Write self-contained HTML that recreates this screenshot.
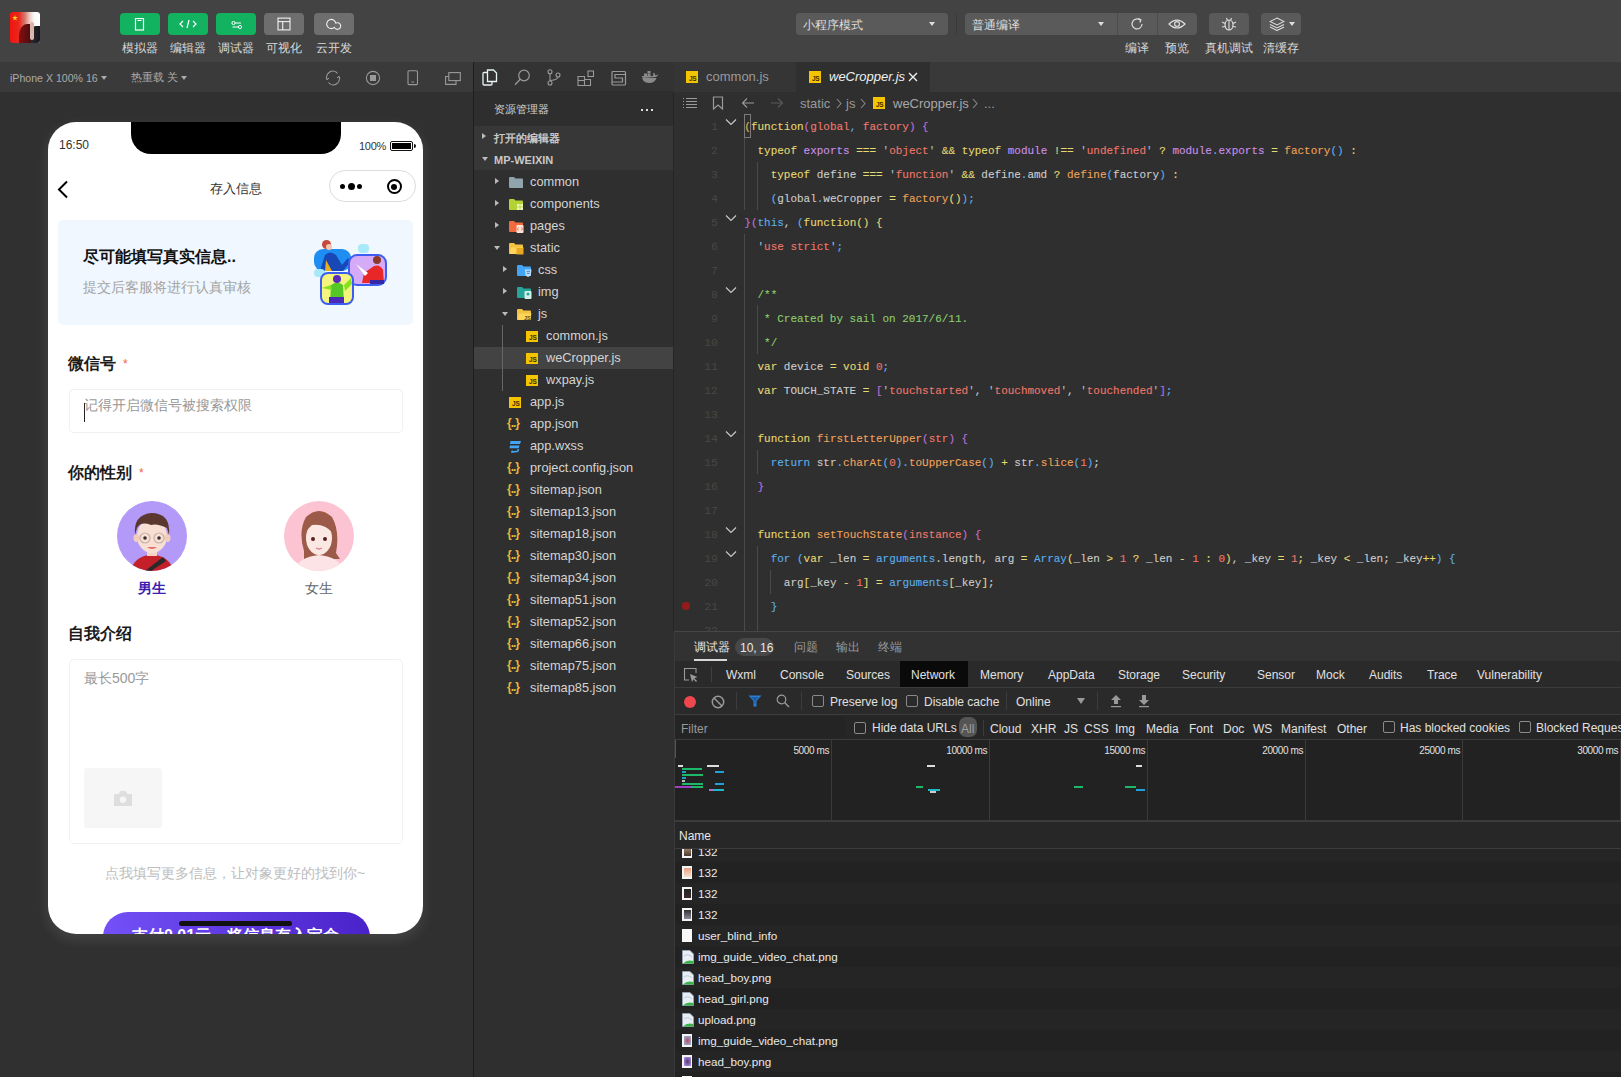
<!DOCTYPE html>
<html><head><meta charset="utf-8">
<style>
*{margin:0;padding:0;box-sizing:border-box}
html,body{width:1621px;height:1077px;overflow:hidden;background:#303030;font-family:"Liberation Sans",sans-serif;color:#ccc}
.a{position:absolute}
.t{position:absolute;white-space:nowrap;line-height:1}
/* toolbar */
#tb{left:0;top:0;width:1621px;height:62px;background:#434343}
.gbtn{position:absolute;top:13px;width:40px;height:22px;border-radius:4px;background:#12b261}
.gybtn{background:#6e6e6e}
.lbl{position:absolute;top:41px;font-size:12px;color:#d8d8d8;white-space:nowrap;line-height:14px;text-align:center;width:60px}
.dd{position:absolute;top:13px;height:22px;background:#5a5a5a;border-radius:4px}
.tri{position:absolute;width:0;height:0;border-left:3px solid transparent;border-right:3px solid transparent;border-top:4px solid #ddd}
/* sim */
#simbar{left:0;top:62px;width:473px;height:30px;background:#3a3a3a}
#sep1{left:473px;top:62px;width:1px;height:1015px;background:#1e1e1e}
#phone{left:48px;top:122px;width:375px;height:812px;background:#fff;border-radius:28px;overflow:hidden;box-shadow:0 5px 12px 2px rgba(255,255,255,.085)}
/* explorer */
#exp{left:474px;top:62px;width:200px;height:1015px;background:#2f2f2f}
.row{position:absolute;left:0;width:200px;height:22px;font-size:13px;color:#d0d0d0;line-height:22px;white-space:nowrap}
/* editor */
#ed{left:674px;top:62px;width:947px;height:570px;background:#2f2f2f}
.ln{position:absolute;left:0;width:44px;margin-top:1px;text-align:right;font-family:"Liberation Mono",monospace;font-size:11.5px;color:#474747;line-height:24px}
.cl{position:absolute;left:70.3px;margin-top:1px;font-family:"Liberation Mono",monospace;font-size:10.98px;line-height:24px;white-space:pre;color:#d4d4d4;-webkit-text-stroke:0.1px currentColor}
/* devtools */
#dv{left:674px;top:632px;width:947px;height:445px;background:#242424}
</style></head><body>
<div id="tb" class="a">
<div class="a" style="left:10px;top:12px;width:30px;height:31px;border-radius:3px;overflow:hidden;background:linear-gradient(90deg,#f0140e 0%,#e8281e 30%,#d87a70 50%,#ecc8c0 65%,#fafafa 80%,#fff 100%)">
 <div class="a" style="left:9px;top:12px;width:14px;height:19px;border-radius:60% 20% 0 0;background:linear-gradient(90deg,#8a0c0c,#3a1014)"></div>
 <div class="a" style="left:21px;top:14px;width:9px;height:17px;border-radius:50% 0 0 0;background:linear-gradient(90deg,#2a2a30,#15151a)"></div>
 <div class="a" style="left:20px;top:10px;width:4px;height:18px;border-radius:2px;background:linear-gradient(#e0b0a8,#d8b8b0)"></div>
 <div class="a" style="left:2px;top:3px;width:6px;height:6px;background:#ffd21a;clip-path:polygon(50% 0,61% 35%,98% 35%,68% 57%,79% 91%,50% 70%,21% 91%,32% 57%,2% 35%,39% 35%)"></div>
</div>
<div class="gbtn" style="left:120px"><svg class="a" style="left:14px;top:5px" width="12" height="13" viewBox="0 0 12 13"><rect x="1.5" y="0.5" width="8" height="11.5" fill="none" stroke="#fff" stroke-width="1.2"/><line x1="3.5" y1="2.5" x2="7.5" y2="2.5" stroke="#fff" stroke-width="1"/></svg></div>
<div class="gbtn" style="left:168px"><svg class="a" style="left:11px;top:6px" width="18" height="10" viewBox="0 0 18 10"><path d="M4 2 L1 5 L4 8 M14 2 L17 5 L14 8 M10 1 L8 9" fill="none" stroke="#fff" stroke-width="1.2"/></svg></div>
<div class="gbtn" style="left:216px"><svg class="a" style="left:15px;top:8px" width="12" height="9" viewBox="0 0 12 9"><line x1="3.5" y1="2" x2="10" y2="2" stroke="#fff" stroke-width="1"/><line x1="1.5" y1="6" x2="8" y2="6" stroke="#fff" stroke-width="1"/><circle cx="2.5" cy="2" r="1.6" fill="#12b261" stroke="#fff" stroke-width="1"/><circle cx="9" cy="6" r="1.6" fill="#12b261" stroke="#fff" stroke-width="1"/></svg></div>
<div class="gbtn gybtn" style="left:264px"><svg class="a" style="left:13px;top:4px" width="14" height="14" viewBox="0 0 14 14"><rect x="1" y="1.1" width="12" height="11.8" fill="none" stroke="#f0f0f0" stroke-width="1.1"/><line x1="1" y1="4.6" x2="13" y2="4.6" stroke="#f0f0f0" stroke-width="1.1"/><line x1="5.7" y1="4.6" x2="5.7" y2="12.9" stroke="#f0f0f0" stroke-width="1.1"/></svg></div>
<div class="gbtn gybtn" style="left:314px"><svg class="a" style="left:11px;top:5px" width="18" height="13" viewBox="0 0 18 13"><path d="M10.81 5.11 A4.6 4.6 0 1 0 9.41 9.39 A3.3 3.3 0 1 0 10.81 5.11 Z" fill="none" stroke="#f0f0f0" stroke-width="1.1"/></svg></div>
<div class="lbl" style="left:110px">模拟器</div>
<div class="lbl" style="left:158px">编辑器</div>
<div class="lbl" style="left:206px">调试器</div>
<div class="lbl" style="left:254px">可视化</div>
<div class="lbl" style="left:304px">云开发</div>

<div class="dd" style="left:796px;width:152px"><div class="t" style="left:7px;top:6px;font-size:12px;color:#ddd">小程序模式</div><div class="tri" style="left:133px;top:9px"></div></div>
<div class="a" style="left:956px;top:14px;width:1px;height:20px;background:#3a3a3a"></div>
<div class="dd" style="left:965px;width:232px"><div class="t" style="left:7px;top:6px;font-size:12px;color:#ddd">普通编译</div><div class="tri" style="left:133px;top:9px"></div>
 <div class="a" style="left:152px;top:0;width:1px;height:22px;background:#4c4c4c"></div>
 <div class="a" style="left:192px;top:0;width:1px;height:22px;background:#4c4c4c"></div>
 <svg class="a" style="left:164px;top:3px" width="16" height="16" viewBox="0 0 16 16"><path d="M13 8 A5 5 0 1 1 11.2 4.1" fill="none" stroke="#ddd" stroke-width="1.2"/><path d="M9.5 2.5 L12 4 L10.8 6.6" fill="none" stroke="#ddd" stroke-width="1.2"/></svg>
 <svg class="a" style="left:203px;top:5px" width="18" height="12" viewBox="0 0 18 12"><path d="M1 6 Q9 -2 17 6 Q9 14 1 6 Z" fill="none" stroke="#ddd" stroke-width="1.2"/><circle cx="9" cy="6" r="2.4" fill="none" stroke="#ddd" stroke-width="1.2"/></svg>
</div>
<div class="dd" style="left:1209px;width:40px"><svg class="a" style="left:12px;top:3px" width="16" height="16" viewBox="0 0 16 16"><ellipse cx="8" cy="9" rx="4" ry="5" fill="none" stroke="#ddd" stroke-width="1.2"/><path d="M8 4 V14 M1 6 L4 7.5 M15 6 L12 7.5 M1 11 L4 10.5 M15 11 L12 10.5 M5.5 2 L6.5 4.5 M10.5 2 L9.5 4.5" fill="none" stroke="#ddd" stroke-width="1.1"/></svg></div>
<div class="dd" style="left:1261px;width:40px"><svg class="a" style="left:8px;top:4px" width="16" height="14" viewBox="0 0 16 14"><path d="M8 1 L15 4.5 L8 8 L1 4.5 Z" fill="none" stroke="#ddd" stroke-width="1.1"/><path d="M1 7.5 L8 11 L15 7.5 M1 10 L8 13.5 L15 10" fill="none" stroke="#ddd" stroke-width="1.1"/></svg><div class="tri" style="left:28px;top:9px"></div></div>
<div class="lbl" style="left:1107px">编译</div>
<div class="lbl" style="left:1147px">预览</div>
<div class="lbl" style="left:1199px">真机调试</div>
<div class="lbl" style="left:1251px">清缓存</div>
</div>
<div id="simbar" class="a">
<div class="t" style="left:10px;top:10.5px;font-size:10.6px;color:#aaa">iPhone X 100% 16</div><div class="tri" style="left:100.5px;top:14px;border-top-color:#aaa;border-left-width:3.5px;border-right-width:3.5px;border-top-width:4.5px"></div>
<div class="t" style="left:131px;top:9.5px;font-size:11px;color:#aaa">热重载 关</div><div class="tri" style="left:181px;top:14px;border-top-color:#aaa;border-left-width:3.5px;border-right-width:3.5px;border-top-width:4.5px"></div>
<svg class="a" style="left:325px;top:8px" width="16" height="16" viewBox="0 0 16 16"><path d="M2.2 9.5 A6 6 0 0 1 12.5 3.5" fill="none" stroke="#999" stroke-width="1.1"/><path d="M13.8 6.5 A6 6 0 0 1 3.5 12.5" fill="none" stroke="#999" stroke-width="1.1"/><path d="M1 7.5 L2.2 9.8 L4 8" fill="none" stroke="#999" stroke-width="1"/><path d="M15 8.5 L13.8 6.2 L12 8" fill="none" stroke="#999" stroke-width="1"/></svg>
<svg class="a" style="left:365px;top:8px" width="16" height="16" viewBox="0 0 16 16"><circle cx="8" cy="8" r="6.6" fill="none" stroke="#999" stroke-width="1.1"/><rect x="5" y="5" width="6" height="6" fill="#999"/></svg>
<svg class="a" style="left:407px;top:8px" width="12" height="16" viewBox="0 0 12 16"><rect x="1" y="0.8" width="9.5" height="13.8" rx="1" fill="none" stroke="#999" stroke-width="1.1"/><line x1="4.3" y1="12" x2="7.2" y2="12" stroke="#999" stroke-width="1"/></svg>
<svg class="a" style="left:445px;top:10px" width="16" height="14" viewBox="0 0 16 14"><rect x="3.8" y="0.6" width="11.5" height="8" fill="none" stroke="#999" stroke-width="1.1"/><path d="M3.8 4.5 H0.6 V12.4 H11 V8.6" fill="none" stroke="#999" stroke-width="1.1"/></svg>
</div>
<div id="sep1" class="a"></div>
<div id="phone" class="a">
<div class="a" style="left:83px;top:0;width:210px;height:32px;background:#000;border-radius:0 0 20px 20px"></div>
<div class="t" style="left:11px;top:17px;font-size:12px;color:#333">16:50</div>
<div class="t" style="left:311px;top:19px;font-size:11px;color:#333;letter-spacing:-0.3px">100%</div>
<div class="a" style="left:342px;top:19px;width:23px;height:10px;border:1.2px solid #111;border-radius:2px;padding:1px"><div style="width:100%;height:100%;background:#000"></div></div>
<div class="a" style="left:365.5px;top:22px;width:2px;height:4px;background:#111;border-radius:0 2px 2px 0"></div>
<svg class="a" style="left:8px;top:58px" width="14" height="19" viewBox="0 0 14 19"><path d="M11 1.5 L3 9.5 L11 17.5" fill="none" stroke="#000" stroke-width="2"/></svg>
<div class="t" style="left:162px;top:60px;font-size:13px;color:#333">存入信息</div>
<div class="a" style="left:281px;top:48px;width:87px;height:32px;border:1px solid #dcdcdc;border-radius:16px"></div>
<div class="a" style="left:292px;top:62.3px;width:5px;height:5px;border-radius:50%;background:#000"></div>
<div class="a" style="left:299.5px;top:61.3px;width:7px;height:7px;border-radius:50%;background:#000"></div>
<div class="a" style="left:309px;top:62.3px;width:5px;height:5px;border-radius:50%;background:#000"></div>
<div class="a" style="left:338.5px;top:56.8px;width:15.5px;height:15.5px;border-radius:50%;border:2px solid #000"></div>
<div class="a" style="left:343.3px;top:61.6px;width:6px;height:6px;border-radius:50%;background:#000"></div>

<div class="a" style="left:10px;top:98px;width:355px;height:105px;background:#f0f7fe;border-radius:5px"></div>
<div class="t" style="left:35px;top:127px;font-size:16px;font-weight:bold;color:#111">尽可能填写真实信息..</div>
<div class="t" style="left:35px;top:158px;font-size:14px;color:#a3a3a3">提交后客服将进行认真审核</div>
<svg class="a" style="left:264px;top:116px" width="78" height="68" viewBox="0 0 78 68">
 <rect x="2" y="11" width="37" height="22" rx="9" fill="#1e8ef2"/>
 <path d="M8 33 L13 17 Q18 12 24 17 L30 27 L36 20 L38 24 L31 33 Z" fill="#1847b8"/>
 <path d="M14 22 L20 33 L13 33 Z" fill="#e8b020"/>
 <circle cx="14.5" cy="6.5" r="4.5" fill="#c44a3a"/>
 <circle cx="17" cy="9" r="3" fill="#f5c5b0"/>
 <rect x="2" y="31" width="11" height="8" rx="4" fill="#a8e8f8"/>
 <rect x="46" y="6" width="11" height="9" rx="4" fill="#a8e8f8"/>
 <rect x="37" y="17" width="37" height="30" rx="8" fill="#d5aaf6" stroke="#3b5df0" stroke-width="2"/>
 <path d="M50 45 L52 35 L62 28 Q68 26 71 32 L72 45 Z" fill="#e82828"/>
 <path d="M44 26 L53 38 L56 35 Z" fill="#fff"/>
 <circle cx="65" cy="22" r="4" fill="#8a3a2a"/>
 <rect x="58" y="42" width="14" height="4" fill="#3428a8"/>
 <rect x="9" y="35" width="32" height="31" rx="7" fill="#f4f57e" stroke="#3b5df0" stroke-width="2"/>
 <path d="M18 65 L19 47 Q25 42 31 47 L32 65 Z" fill="#55c828"/>
 <path d="M10 50 L19 47 L20 52 Z M32 47 L39 40 L40 46 L33 53 Z" fill="#88e020"/>
 <circle cx="25" cy="41" r="4" fill="#5a2ab8"/>
 <rect x="17" y="59" width="15" height="6" fill="#4a28b8"/>
</svg>

<div class="t" style="left:20px;top:234px;font-size:16px;font-weight:bold;color:#1a1a1a">微信号</div>
<div class="t" style="left:75px;top:236px;font-size:12px;color:#f0604d">*</div>
<div class="a" style="left:21px;top:267px;width:334px;height:44px;border:1px solid #f1f1f1;border-radius:4px"></div>
<div class="t" style="left:36px;top:276px;font-size:14px;color:#999">记得开启微信号被搜索权限</div>
<div class="a" style="left:36px;top:281px;width:1.3px;height:19px;background:#222"></div>

<div class="t" style="left:20px;top:343px;font-size:16px;font-weight:bold;color:#1a1a1a">你的性别</div>
<div class="t" style="left:91px;top:345px;font-size:12px;color:#f0604d">*</div>

<svg class="a" style="left:69px;top:379px" width="70" height="70" viewBox="0 0 70 70">
 <defs><clipPath id="cb"><circle cx="35" cy="35" r="35"/></clipPath></defs>
 <circle cx="35" cy="35" r="35" fill="#b39af9"/>
 <g clip-path="url(#cb)">
 <path d="M14 70 Q16 56 35 53 Q54 56 56 70 Z" fill="#c4202a"/>
 <path d="M28 70 L46 56 L49 60 L34 70 Z" fill="#2a2a2a"/>
 <rect x="30" y="46" width="10" height="9" fill="#f5d3c3"/>
 <ellipse cx="35" cy="35" rx="15" ry="17" fill="#f7e0d3"/>
 <ellipse cx="19.5" cy="37" rx="3" ry="4" fill="#f0cdbd"/>
 <ellipse cx="50.5" cy="37" rx="3" ry="4" fill="#f0cdbd"/>
 <path d="M18 34 Q16 14 34 12 Q54 12 52 34 L50 27 Q40 22 34 24 Q24 20 20 27 Z" fill="#5a3830"/>
 <circle cx="28" cy="37" r="5" fill="none" stroke="#c8b0a8" stroke-width="1.2"/>
 <circle cx="42" cy="37" r="5" fill="none" stroke="#c8b0a8" stroke-width="1.2"/>
 <circle cx="28" cy="37" r="1.8" fill="#3a2a2a"/>
 <circle cx="42" cy="37" r="1.8" fill="#3a2a2a"/>
 <path d="M30 46 Q35 50 40 46 Z" fill="#e86a6a"/>
 </g>
</svg>
<svg class="a" style="left:236px;top:379px" width="70" height="70" viewBox="0 0 70 70">
 <defs><clipPath id="cg"><circle cx="35" cy="35" r="35"/></clipPath></defs>
 <circle cx="35" cy="35" r="35" fill="#fcc3d3"/>
 <g clip-path="url(#cg)">
 <path d="M20 50 Q14 30 22 16 Q35 4 48 16 Q56 30 52 52 L56 58 L48 58 L20 58 Z" fill="#9c5a48"/>
 <path d="M10 70 Q14 56 35 54 Q56 56 60 70 Z" fill="#fbe3e6"/>
 <ellipse cx="35" cy="37" rx="13" ry="17" fill="#fbe8e2"/>
 <path d="M22 30 Q26 16 40 18 Q48 22 49 32 Q40 22 28 24 Z" fill="#9c5a48"/>
 <circle cx="29" cy="38" r="2" fill="#5a2020"/>
 <circle cx="41" cy="38" r="2" fill="#5a2020"/>
 <path d="M32 47 Q35 49 38 47" fill="none" stroke="#e07a8a" stroke-width="1.3"/>
 </g>
</svg>
<div class="t" style="left:90px;top:459px;font-size:14px;font-weight:bold;color:#3a1eb0">男生</div>
<div class="t" style="left:257px;top:459px;font-size:14px;color:#666">女生</div>

<div class="t" style="left:20px;top:504px;font-size:16px;font-weight:bold;color:#1a1a1a">自我介绍</div>
<div class="a" style="left:20.5px;top:537px;width:334px;height:185px;border:1px solid #f1f1f1;border-radius:5px"></div>
<div class="t" style="left:36px;top:549px;font-size:14px;color:#999">最长500字</div>
<div class="a" style="left:36px;top:646px;width:78px;height:60px;background:#f6f6f7;border-radius:3px"></div>
<svg class="a" style="left:65px;top:668px" width="20" height="17" viewBox="0 0 20 17"><path d="M1 4 H5.5 L7.5 1 H12.5 L14.5 4 H19 V16 H1 Z" fill="#dedede"/><circle cx="10" cy="9.8" r="3.2" fill="#f6f6f7"/></svg>
<div class="t" style="left:57px;top:744px;font-size:14px;color:#bdbdbd">点我填写更多信息，让对象更好的找到你~</div>
<div class="a" style="left:54.5px;top:790px;width:267px;height:50px;border-radius:25px;background:linear-gradient(90deg,#7350f7,#4a22c9)"></div>
<div class="t" style="left:84px;top:806px;font-size:16px;font-weight:bold;color:#fff">支付0.01元，将信息存入宝盒</div>
<div class="a" style="left:131px;top:798.5px;width:113px;height:5px;border-radius:3px;background:#111"></div>
</div>
<div id="exp" class="a">
<div class="a" style="left:0;top:0;width:200px;height:29px;background:#333"></div>
<svg class="a" style="left:8px;top:7px" width="16" height="17" viewBox="0 0 16 17"><path d="M5.5 3.5 H2 Q1 3.5 1 4.5 V15 Q1 16 2 16 H9 Q10 16 10 15 V13" fill="none" stroke="#e6f4f4" stroke-width="1.3"/><path d="M5.5 1 H11.5 L14.5 4 V12.5 H5.5 Z" fill="none" stroke="#e6f4f4" stroke-width="1.3"/></svg>
<svg class="a" style="left:40px;top:7px" width="17" height="17" viewBox="0 0 17 17"><circle cx="10" cy="6.5" r="5.3" fill="none" stroke="#999" stroke-width="1.2"/><line x1="6.2" y1="10.3" x2="1" y2="15.8" stroke="#999" stroke-width="1.3"/></svg>
<svg class="a" style="left:73px;top:7px" width="14" height="17" viewBox="0 0 14 17"><circle cx="3" cy="2.8" r="2" fill="none" stroke="#999" stroke-width="1.1"/><circle cx="3" cy="14" r="2" fill="none" stroke="#999" stroke-width="1.1"/><circle cx="11" cy="6" r="2" fill="none" stroke="#999" stroke-width="1.1"/><path d="M3 4.8 V12 M11 8 Q11 10.5 3.5 11.5" fill="none" stroke="#999" stroke-width="1.1"/></svg>
<svg class="a" style="left:103px;top:8px" width="18" height="17" viewBox="0 0 18 17"><path d="M1 6.5 H7.5 V15.5 H1 Z M7.5 9.5 H13.5 V15.5 H1" fill="none" stroke="#999" stroke-width="1.1"/><line x1="1" y1="10.5" x2="7.5" y2="10.5" stroke="#999" stroke-width="1.1"/><rect x="11" y="1" width="5.5" height="5.5" fill="none" stroke="#999" stroke-width="1.1"/></svg>
<svg class="a" style="left:137px;top:8px" width="16" height="16" viewBox="0 0 16 16"><rect x="1" y="1.5" width="13.5" height="13.5" rx="1" fill="none" stroke="#999" stroke-width="1.2"/><path d="M14 4.5 H4 V8 H11.5 V12 H1" fill="none" stroke="#999" stroke-width="1.2"/></svg>
<svg class="a" style="left:167px;top:9px" width="18" height="13" viewBox="0 0 18 13"><path d="M1 6 H15 Q17 5 17.5 3 Q16 4 14.5 4.5 Q14 2 12.5 1.5 L12 5 H1 Q1 12 8 12 Q14 12 15.5 7 Z" fill="#8a8a8a"/><rect x="3" y="2.5" width="3" height="2.5" fill="#8a8a8a"/><rect x="6.5" y="2.5" width="3" height="2.5" fill="#8a8a8a"/><rect x="6.5" y="0" width="3" height="2.2" fill="#8a8a8a"/></svg>
<div class="a" style="left:0;top:29px;width:200px;height:35px;background:#2e2e2e"></div>
<div class="t" style="left:20px;top:42px;font-size:11px;color:#d0d0d0">资源管理器</div>
<div class="a" style="left:167px;top:47px;width:2.2px;height:2.2px;background:#ddd;box-shadow:5px 0 #ddd,10px 0 #ddd"></div>
<div class="a" style="left:0;top:64px;width:200px;height:44px;background:#373737"></div>
<div class="tri" style="left:8px;top:71px;border:0;border-top:3.5px solid transparent;border-bottom:3.5px solid transparent;border-left:4.5px solid #bbb"></div>
<div class="t" style="left:20px;top:70.5px;font-size:11px;font-weight:bold;color:#c8c8c8">打开的编辑器</div>
<div class="tri" style="left:8px;top:95px;border-top:4.5px solid #bbb;border-left:3.5px solid transparent;border-right:3.5px solid transparent"></div>
<div class="t" style="left:20px;top:93px;font-size:11px;font-weight:bold;color:#c8c8c8">MP-WEIXIN</div>
<div class="tri" style="left:21px;top:116px;border:0;border-top:3.5px solid transparent;border-bottom:3.5px solid transparent;border-left:4.5px solid #bbb"></div><svg class="a" style="left:35px;top:115px" width="15" height="12" viewBox="0 0 15 12"><path d="M0 1 Q0 0 1 0 H5 L6.5 1.5 H13 Q14 1.5 14 2.5 V10.5 Q14 11 13 11 H1 Q0 11 0 10 Z" fill="#90a4ae"/></svg><div class="t" style="left:56px;top:114.3px;font-size:12.8px;color:#d4d4d4">common</div><div class="tri" style="left:21px;top:138px;border:0;border-top:3.5px solid transparent;border-bottom:3.5px solid transparent;border-left:4.5px solid #bbb"></div><svg class="a" style="left:35px;top:137px" width="15" height="12" viewBox="0 0 15 12"><path d="M0 1 Q0 0 1 0 H5 L6.5 1.5 H13 Q14 1.5 14 2.5 V10.5 Q14 11 13 11 H1 Q0 11 0 10 Z" fill="#b3d335"/><rect x="8" y="5" width="2.6" height="2.6" fill="#eaf5c0"/><rect x="11.4" y="5" width="2.6" height="2.6" fill="#eaf5c0"/><rect x="8" y="8.4" width="2.6" height="2.6" fill="#eaf5c0"/><rect x="11.4" y="8.4" width="2.6" height="2.6" fill="#eaf5c0"/></svg><div class="t" style="left:56px;top:136.3px;font-size:12.8px;color:#d4d4d4">components</div><div class="tri" style="left:21px;top:160px;border:0;border-top:3.5px solid transparent;border-bottom:3.5px solid transparent;border-left:4.5px solid #bbb"></div><svg class="a" style="left:35px;top:159px" width="15" height="12" viewBox="0 0 15 12"><path d="M0 1 Q0 0 1 0 H5 L6.5 1.5 H13 Q14 1.5 14 2.5 V10.5 Q14 11 13 11 H1 Q0 11 0 10 Z" fill="#f26a3d"/><rect x="7.5" y="4" width="7" height="8" rx="1" fill="#fde2d8"/><path d="M9.5 6.5 L8.5 8 L9.5 9.5 M12.5 6.5 L13.5 8 L12.5 9.5" fill="none" stroke="#e0503a" stroke-width="0.8"/></svg><div class="t" style="left:56px;top:158.3px;font-size:12.8px;color:#d4d4d4">pages</div><div class="tri" style="left:20px;top:184px;border-top:4.5px solid #bbb;border-left:3.5px solid transparent;border-right:3.5px solid transparent"></div><svg class="a" style="left:35px;top:181px" width="15" height="12" viewBox="0 0 15 12"><path d="M0 1 Q0 0 1 0 H5 L6.5 1.5 H13 Q14 1.5 14 2.5 V10.5 Q14 11 13 11 H1 Q0 11 0 10 Z" fill="#f3c240"/><path d="M2 4.5 H14.5 L13 11 H0.5 Z" fill="#ffd45a"/><rect x="7.5" y="5" width="7" height="6.5" fill="#e8a820"/></svg><div class="t" style="left:56px;top:180.3px;font-size:12.8px;color:#d4d4d4">static</div><div class="tri" style="left:29px;top:204px;border:0;border-top:3.5px solid transparent;border-bottom:3.5px solid transparent;border-left:4.5px solid #bbb"></div><svg class="a" style="left:43px;top:203px" width="15" height="12" viewBox="0 0 15 12"><path d="M0 1 Q0 0 1 0 H5 L6.5 1.5 H13 Q14 1.5 14 2.5 V10.5 Q14 11 13 11 H1 Q0 11 0 10 Z" fill="#42a5f5"/><path d="M8 4.5 H14.5 L13.8 10.5 L11 12 L8.5 10.5 Z" fill="#bfe0fb"/><path d="M9.5 6.3 H13 M9.7 8.3 H12.8" stroke="#2a7ad0" stroke-width="0.9"/></svg><div class="t" style="left:64px;top:202.3px;font-size:12.8px;color:#d4d4d4">css</div><div class="tri" style="left:29px;top:226px;border:0;border-top:3.5px solid transparent;border-bottom:3.5px solid transparent;border-left:4.5px solid #bbb"></div><svg class="a" style="left:43px;top:225px" width="15" height="12" viewBox="0 0 15 12"><path d="M0 1 Q0 0 1 0 H5 L6.5 1.5 H13 Q14 1.5 14 2.5 V10.5 Q14 11 13 11 H1 Q0 11 0 10 Z" fill="#26a69a"/><rect x="7.5" y="4" width="7" height="8" rx="1" fill="#d0f0e8"/><circle cx="11" cy="7" r="1.5" fill="#26a69a"/></svg><div class="t" style="left:64px;top:224.3px;font-size:12.8px;color:#d4d4d4">img</div><div class="tri" style="left:28px;top:250px;border-top:4.5px solid #bbb;border-left:3.5px solid transparent;border-right:3.5px solid transparent"></div><svg class="a" style="left:43px;top:247px" width="15" height="12" viewBox="0 0 15 12"><path d="M0 1 Q0 0 1 0 H5 L6.5 1.5 H13 Q14 1.5 14 2.5 V10.5 Q14 11 13 11 H1 Q0 11 0 10 Z" fill="#f3c240"/><path d="M2 4.5 H14.5 L13 11 H0.5 Z" fill="#ffd45a"/><text x="7" y="10.5" font-size="5.5" font-weight="bold" fill="#6a4a00" font-family="Liberation Sans">JS</text></svg><div class="t" style="left:64px;top:246.3px;font-size:12.8px;color:#d4d4d4">js</div><div class="a" style="left:0;top:285px;width:200px;height:22px;background:#434343"></div><div class="a" style="left:28px;top:263px;width:1px;height:66px;background:#666"></div><div class="a" style="left:52px;top:269px;width:12px;height:11px;background:#f5c400"><div class="t" style="left:3px;top:4px;font-size:6.5px;font-weight:bold;color:#3a2a00">JS</div></div><div class="t" style="left:72px;top:268.3px;font-size:12.8px;color:#d4d4d4">common.js</div><div class="a" style="left:52px;top:291px;width:12px;height:11px;background:#f5c400"><div class="t" style="left:3px;top:4px;font-size:6.5px;font-weight:bold;color:#3a2a00">JS</div></div><div class="t" style="left:72px;top:290.3px;font-size:12.8px;color:#d4d4d4">weCropper.js</div><div class="a" style="left:52px;top:313px;width:12px;height:11px;background:#f5c400"><div class="t" style="left:3px;top:4px;font-size:6.5px;font-weight:bold;color:#3a2a00">JS</div></div><div class="t" style="left:72px;top:312.3px;font-size:12.8px;color:#d4d4d4">wxpay.js</div><div class="a" style="left:35px;top:335px;width:12px;height:11px;background:#f5c400"><div class="t" style="left:3px;top:4px;font-size:6.5px;font-weight:bold;color:#3a2a00">JS</div></div><div class="t" style="left:56px;top:334.3px;font-size:12.8px;color:#d4d4d4">app.js</div><div class="t" style="left:33px;top:355px;font-size:12px;font-weight:bold;color:#e8b83a;letter-spacing:-1px">{..}</div><div class="t" style="left:56px;top:356.3px;font-size:12.8px;color:#d4d4d4">app.json</div><svg class="a" style="left:35px;top:378px" width="13" height="13" viewBox="0 0 13 13"><path d="M1.5 1 H12 L11 4 H1 Z M1 5.5 H10.5 L9.7 8.3 H0.5 Z" fill="#42a5f5"/><path d="M9.5 9 L8.8 11.2 L3 12 L3.2 10.5" fill="none" stroke="#42a5f5" stroke-width="1.5"/></svg><div class="t" style="left:56px;top:378.3px;font-size:12.8px;color:#d4d4d4">app.wxss</div><div class="t" style="left:33px;top:399px;font-size:12px;font-weight:bold;color:#e8b83a;letter-spacing:-1px">{..}</div><div class="t" style="left:56px;top:400.3px;font-size:12.8px;color:#d4d4d4">project.config.json</div><div class="t" style="left:33px;top:421px;font-size:12px;font-weight:bold;color:#e8b83a;letter-spacing:-1px">{..}</div><div class="t" style="left:56px;top:422.3px;font-size:12.8px;color:#d4d4d4">sitemap.json</div><div class="t" style="left:33px;top:443px;font-size:12px;font-weight:bold;color:#e8b83a;letter-spacing:-1px">{..}</div><div class="t" style="left:56px;top:444.3px;font-size:12.8px;color:#d4d4d4">sitemap13.json</div><div class="t" style="left:33px;top:465px;font-size:12px;font-weight:bold;color:#e8b83a;letter-spacing:-1px">{..}</div><div class="t" style="left:56px;top:466.3px;font-size:12.8px;color:#d4d4d4">sitemap18.json</div><div class="t" style="left:33px;top:487px;font-size:12px;font-weight:bold;color:#e8b83a;letter-spacing:-1px">{..}</div><div class="t" style="left:56px;top:488.3px;font-size:12.8px;color:#d4d4d4">sitemap30.json</div><div class="t" style="left:33px;top:509px;font-size:12px;font-weight:bold;color:#e8b83a;letter-spacing:-1px">{..}</div><div class="t" style="left:56px;top:510.3px;font-size:12.8px;color:#d4d4d4">sitemap34.json</div><div class="t" style="left:33px;top:531px;font-size:12px;font-weight:bold;color:#e8b83a;letter-spacing:-1px">{..}</div><div class="t" style="left:56px;top:532.3px;font-size:12.8px;color:#d4d4d4">sitemap51.json</div><div class="t" style="left:33px;top:553px;font-size:12px;font-weight:bold;color:#e8b83a;letter-spacing:-1px">{..}</div><div class="t" style="left:56px;top:554.3px;font-size:12.8px;color:#d4d4d4">sitemap52.json</div><div class="t" style="left:33px;top:575px;font-size:12px;font-weight:bold;color:#e8b83a;letter-spacing:-1px">{..}</div><div class="t" style="left:56px;top:576.3px;font-size:12.8px;color:#d4d4d4">sitemap66.json</div><div class="t" style="left:33px;top:597px;font-size:12px;font-weight:bold;color:#e8b83a;letter-spacing:-1px">{..}</div><div class="t" style="left:56px;top:598.3px;font-size:12.8px;color:#d4d4d4">sitemap75.json</div><div class="t" style="left:33px;top:619px;font-size:12px;font-weight:bold;color:#e8b83a;letter-spacing:-1px">{..}</div><div class="t" style="left:56px;top:620.3px;font-size:12.8px;color:#d4d4d4">sitemap85.json</div></div>
<div class="a" style="left:673px;top:92px;width:1px;height:540px;background:#262626;z-index:2"></div>
<div id="ed" class="a">
<div class="a" style="left:0;top:0;width:947px;height:30px;background:#393939"></div>
<div class="a" style="left:0;top:0;width:122px;height:30px;background:#353535"></div>
<div class="a" style="left:122px;top:0;width:134px;height:30px;background:#2f2f2f"></div>
<div class="a" style="left:12px;top:9px;width:12px;height:12px;background:#f5c400"><div class="t" style="left:3px;top:5px;font-size:6.5px;font-weight:bold;color:#3a2a00;letter-spacing:-0.3px">JS</div></div>
<div class="t" style="left:32px;top:8px;font-size:13px;color:#9a9a9a">common.js</div>
<div class="a" style="left:135px;top:9px;width:12px;height:12px;background:#f5c400"><div class="t" style="left:3px;top:5px;font-size:6.5px;font-weight:bold;color:#3a2a00;letter-spacing:-0.3px">JS</div></div>
<div class="t" style="left:155px;top:8px;font-size:13px;font-style:italic;color:#f0f0f0">weCropper.js</div>
<svg class="a" style="left:234px;top:10px" width="10" height="10" viewBox="0 0 10 10"><path d="M1 1 L9 9 M9 1 L1 9" stroke="#eee" stroke-width="1.4"/></svg>
<svg class="a" style="left:8px;top:35px" width="16" height="12" viewBox="0 0 16 12"><path d="M1 1.5 H2 M1 4.5 H2 M1 7.5 H2 M1 10.5 H2 M4 1.5 H15 M4 4.5 H15 M4 7.5 H15 M4 10.5 H15" stroke="#9a9a9a" stroke-width="1"/></svg>
<svg class="a" style="left:38px;top:34px" width="12" height="14" viewBox="0 0 12 14"><path d="M1.5 1 H10.5 V13 L6 9 L1.5 13 Z" fill="none" stroke="#9a9a9a" stroke-width="1.2"/></svg>
<svg class="a" style="left:67px;top:35px" width="14" height="12" viewBox="0 0 14 12"><path d="M13 6 H1.5 M6 1.5 L1.5 6 L6 10.5" fill="none" stroke="#9a9a9a" stroke-width="1.1"/></svg>
<svg class="a" style="left:96px;top:35px" width="14" height="12" viewBox="0 0 14 12"><path d="M1 6 H12.5 M8 1.5 L12.5 6 L8 10.5" fill="none" stroke="#5a5a5a" stroke-width="1.1"/></svg>
<div class="t" style="left:126px;top:35px;font-size:13px;color:#9a9a9a">static</div>
<svg class="a" style="left:162px;top:36px" width="6" height="11" viewBox="0 0 6 11"><path d="M1 1 L5 5.5 L1 10" fill="none" stroke="#8a8a8a" stroke-width="1.1"/></svg>
<div class="t" style="left:172px;top:35px;font-size:13px;color:#9a9a9a">js</div>
<svg class="a" style="left:186px;top:36px" width="6" height="11" viewBox="0 0 6 11"><path d="M1 1 L5 5.5 L1 10" fill="none" stroke="#8a8a8a" stroke-width="1.1"/></svg>
<div class="a" style="left:199px;top:35px;width:12px;height:12px;background:#f5c400"><div class="t" style="left:3px;top:5px;font-size:6.5px;font-weight:bold;color:#3a2a00;letter-spacing:-0.3px">JS</div></div>
<div class="t" style="left:219px;top:35px;font-size:13px;color:#a8a8a8">weCropper.js</div>
<svg class="a" style="left:298px;top:36px" width="6" height="11" viewBox="0 0 6 11"><path d="M1 1 L5 5.5 L1 10" fill="none" stroke="#8a8a8a" stroke-width="1.1"/></svg>
<div class="t" style="left:310px;top:35px;font-size:13px;color:#9a9a9a">...</div>
<div class="a" style="left:70px;top:76px;width:1px;height:72px;background:#4a4a4a"></div>
<div class="a" style="left:83px;top:100px;width:1px;height:48px;background:#4a4a4a"></div>
<div class="a" style="left:70px;top:172px;width:1px;height:398px;background:#4a4a4a"></div>
<div class="a" style="left:83px;top:243px;width:1px;height:49px;background:#4a4a4a"></div>
<div class="a" style="left:83px;top:388px;width:1px;height:24px;background:#4a4a4a"></div>
<div class="a" style="left:83px;top:484px;width:1px;height:86px;background:#4a4a4a"></div>
<div class="a" style="left:96px;top:508px;width:1px;height:24px;background:#4a4a4a"></div>
<div class="a" style="left:70px;top:52px;width:7px;height:24px;border:1px solid #7a7a7a"></div>
<div class="ln" style="top:52px">1</div>
<svg class="a" style="left:51px;top:56px" width="12" height="8" viewBox="0 0 12 8"><path d="M1 1.5 L6 6.5 L11 1.5" fill="none" stroke="#c8c8c8" stroke-width="1.2"/></svg>
<div class="cl" style="top:52px"><span style="color:#e2b446">(</span><span style="color:#e6da72">function</span><span style="color:#c070d8">(</span><span style="color:#ef7a6e">global</span><span style="color:#5cb0ee">,</span><span style="color:#cdcdcd"> </span><span style="color:#ef7a6e">factory</span><span style="color:#c070d8">)</span><span style="color:#cdcdcd"> </span><span style="color:#c070d8">{</span></div>
<div class="ln" style="top:76px">2</div>
<div class="cl" style="top:76px"><span style="color:#cdcdcd">  </span><span style="color:#e6da72">typeof</span><span style="color:#cdcdcd"> </span><span style="color:#cc8fec">exports</span><span style="color:#cdcdcd"> </span><span style="color:#e6da72">===</span><span style="color:#cdcdcd"> </span><span style="color:#9cc4dc">&#x27;</span><span style="color:#ef776a">object</span><span style="color:#9cc4dc">&#x27;</span><span style="color:#cdcdcd"> </span><span style="color:#e6da72">&amp;&amp;</span><span style="color:#cdcdcd"> </span><span style="color:#e6da72">typeof</span><span style="color:#cdcdcd"> </span><span style="color:#cc8fec">module</span><span style="color:#cdcdcd"> </span><span style="color:#e6da72">!==</span><span style="color:#cdcdcd"> </span><span style="color:#9cc4dc">&#x27;</span><span style="color:#ef776a">undefined</span><span style="color:#9cc4dc">&#x27;</span><span style="color:#cdcdcd"> </span><span style="color:#e6da72">?</span><span style="color:#cdcdcd"> </span><span style="color:#cc8fec">module</span><span style="color:#5cb0ee">.</span><span style="color:#cc8fec">exports</span><span style="color:#cdcdcd"> </span><span style="color:#e6da72">=</span><span style="color:#cdcdcd"> </span><span style="color:#f2a35a">factory</span><span style="color:#5cb0ee">()</span><span style="color:#cdcdcd"> </span><span style="color:#e6da72">:</span></div>
<div class="ln" style="top:100px">3</div>
<div class="cl" style="top:100px"><span style="color:#cdcdcd">    </span><span style="color:#e6da72">typeof</span><span style="color:#cdcdcd"> define </span><span style="color:#e6da72">===</span><span style="color:#cdcdcd"> </span><span style="color:#9cc4dc">&#x27;</span><span style="color:#ef776a">function</span><span style="color:#9cc4dc">&#x27;</span><span style="color:#cdcdcd"> </span><span style="color:#e6da72">&amp;&amp;</span><span style="color:#cdcdcd"> define</span><span style="color:#5cb0ee">.</span><span style="color:#cdcdcd">amd </span><span style="color:#e6da72">?</span><span style="color:#cdcdcd"> </span><span style="color:#f2a35a">define</span><span style="color:#5cb0ee">(</span><span style="color:#cdcdcd">factory</span><span style="color:#5cb0ee">)</span><span style="color:#cdcdcd"> </span><span style="color:#e6da72">:</span></div>
<div class="ln" style="top:124px">4</div>
<div class="cl" style="top:124px"><span style="color:#cdcdcd">    </span><span style="color:#5cb0ee">(</span><span style="color:#cdcdcd">global</span><span style="color:#5cb0ee">.</span><span style="color:#cdcdcd">weCropper </span><span style="color:#e6da72">=</span><span style="color:#cdcdcd"> </span><span style="color:#f2a35a">factory</span><span style="color:#e6da72">()</span><span style="color:#5cb0ee">)</span><span style="color:#5cb0ee">;</span></div>
<div class="ln" style="top:148px">5</div>
<svg class="a" style="left:51px;top:152px" width="12" height="8" viewBox="0 0 12 8"><path d="M1 1.5 L6 6.5 L11 1.5" fill="none" stroke="#c8c8c8" stroke-width="1.2"/></svg>
<div class="cl" style="top:148px"><span style="color:#c070d8">}</span><span style="color:#c070d8">(</span><span style="color:#5cb0ee">this</span><span style="color:#cdcdcd">,</span><span style="color:#cdcdcd"> </span><span style="color:#5cb0ee">(</span><span style="color:#e6da72">function</span><span style="color:#e6da72">()</span><span style="color:#cdcdcd"> </span><span style="color:#e6da72">{</span></div>
<div class="ln" style="top:172px">6</div>
<div class="cl" style="top:172px"><span style="color:#cdcdcd">  </span><span style="color:#9cc4dc">&#x27;</span><span style="color:#ef776a">use strict</span><span style="color:#9cc4dc">&#x27;</span><span style="color:#5cb0ee">;</span></div>
<div class="ln" style="top:196px">7</div>
<div class="ln" style="top:220px">8</div>
<svg class="a" style="left:51px;top:224px" width="12" height="8" viewBox="0 0 12 8"><path d="M1 1.5 L6 6.5 L11 1.5" fill="none" stroke="#c8c8c8" stroke-width="1.2"/></svg>
<div class="cl" style="top:220px"><span style="color:#cdcdcd">  </span><span style="color:#8dcd6e">/**</span></div>
<div class="ln" style="top:244px">9</div>
<div class="cl" style="top:244px"><span style="color:#cdcdcd">   </span><span style="color:#8dcd6e">* Created by sail on 2017/6/11.</span></div>
<div class="ln" style="top:268px">10</div>
<div class="cl" style="top:268px"><span style="color:#cdcdcd">   </span><span style="color:#8dcd6e">*/</span></div>
<div class="ln" style="top:292px">11</div>
<div class="cl" style="top:292px"><span style="color:#cdcdcd">  </span><span style="color:#e6da72">var</span><span style="color:#cdcdcd"> device </span><span style="color:#e6da72">=</span><span style="color:#cdcdcd"> </span><span style="color:#e6da72">void</span><span style="color:#cdcdcd"> </span><span style="color:#ef776a">0</span><span style="color:#5cb0ee">;</span></div>
<div class="ln" style="top:316px">12</div>
<div class="cl" style="top:316px"><span style="color:#cdcdcd">  </span><span style="color:#e6da72">var</span><span style="color:#cdcdcd"> TOUCH_STATE </span><span style="color:#e6da72">=</span><span style="color:#cdcdcd"> </span><span style="color:#c070d8">[</span><span style="color:#9cc4dc">&#x27;</span><span style="color:#ef776a">touchstarted</span><span style="color:#9cc4dc">&#x27;</span><span style="color:#cdcdcd">,</span><span style="color:#cdcdcd"> </span><span style="color:#9cc4dc">&#x27;</span><span style="color:#ef776a">touchmoved</span><span style="color:#9cc4dc">&#x27;</span><span style="color:#cdcdcd">,</span><span style="color:#cdcdcd"> </span><span style="color:#9cc4dc">&#x27;</span><span style="color:#ef776a">touchended</span><span style="color:#9cc4dc">&#x27;</span><span style="color:#c070d8">]</span><span style="color:#5cb0ee">;</span></div>
<div class="ln" style="top:340px">13</div>
<div class="ln" style="top:364px">14</div>
<svg class="a" style="left:51px;top:368px" width="12" height="8" viewBox="0 0 12 8"><path d="M1 1.5 L6 6.5 L11 1.5" fill="none" stroke="#c8c8c8" stroke-width="1.2"/></svg>
<div class="cl" style="top:364px"><span style="color:#cdcdcd">  </span><span style="color:#e6da72">function</span><span style="color:#cdcdcd"> </span><span style="color:#f2a35a">firstLetterUpper</span><span style="color:#c070d8">(</span><span style="color:#ef7a6e">str</span><span style="color:#c070d8">)</span><span style="color:#cdcdcd"> </span><span style="color:#c070d8">{</span></div>
<div class="ln" style="top:388px">15</div>
<div class="cl" style="top:388px"><span style="color:#cdcdcd">    </span><span style="color:#5cb0ee">return</span><span style="color:#cdcdcd"> str</span><span style="color:#5cb0ee">.</span><span style="color:#f2a35a">charAt</span><span style="color:#5cb0ee">(</span><span style="color:#ef776a">0</span><span style="color:#5cb0ee">)</span><span style="color:#5cb0ee">.</span><span style="color:#f2a35a">toUpperCase</span><span style="color:#5cb0ee">()</span><span style="color:#cdcdcd"> </span><span style="color:#e6da72">+</span><span style="color:#cdcdcd"> str</span><span style="color:#5cb0ee">.</span><span style="color:#f2a35a">slice</span><span style="color:#5cb0ee">(</span><span style="color:#ef776a">1</span><span style="color:#5cb0ee">)</span><span style="color:#cdcdcd">;</span></div>
<div class="ln" style="top:412px">16</div>
<div class="cl" style="top:412px"><span style="color:#cdcdcd">  </span><span style="color:#c070d8">}</span></div>
<div class="ln" style="top:436px">17</div>
<div class="ln" style="top:460px">18</div>
<svg class="a" style="left:51px;top:464px" width="12" height="8" viewBox="0 0 12 8"><path d="M1 1.5 L6 6.5 L11 1.5" fill="none" stroke="#c8c8c8" stroke-width="1.2"/></svg>
<div class="cl" style="top:460px"><span style="color:#cdcdcd">  </span><span style="color:#e6da72">function</span><span style="color:#cdcdcd"> </span><span style="color:#f2a35a">setTouchState</span><span style="color:#c070d8">(</span><span style="color:#ef7a6e">instance</span><span style="color:#c070d8">)</span><span style="color:#cdcdcd"> </span><span style="color:#c070d8">{</span></div>
<div class="ln" style="top:484px">19</div>
<svg class="a" style="left:51px;top:488px" width="12" height="8" viewBox="0 0 12 8"><path d="M1 1.5 L6 6.5 L11 1.5" fill="none" stroke="#c8c8c8" stroke-width="1.2"/></svg>
<div class="cl" style="top:484px"><span style="color:#cdcdcd">    </span><span style="color:#5cb0ee">for</span><span style="color:#cdcdcd"> </span><span style="color:#5cb0ee">(</span><span style="color:#e6da72">var</span><span style="color:#cdcdcd"> _len </span><span style="color:#e6da72">=</span><span style="color:#cdcdcd"> </span><span style="color:#5cb0ee">arguments</span><span style="color:#cdcdcd">.length, arg </span><span style="color:#e6da72">=</span><span style="color:#cdcdcd"> </span><span style="color:#5cb0ee">Array</span><span style="color:#e6da72">(</span><span style="color:#cdcdcd">_len </span><span style="color:#e6da72">&gt;</span><span style="color:#cdcdcd"> </span><span style="color:#ef776a">1</span><span style="color:#cdcdcd"> </span><span style="color:#e6da72">?</span><span style="color:#cdcdcd"> _len </span><span style="color:#e6da72">-</span><span style="color:#cdcdcd"> </span><span style="color:#ef776a">1</span><span style="color:#cdcdcd"> </span><span style="color:#e6da72">:</span><span style="color:#cdcdcd"> </span><span style="color:#ef776a">0</span><span style="color:#e6da72">)</span><span style="color:#cdcdcd">, _key </span><span style="color:#e6da72">=</span><span style="color:#cdcdcd"> </span><span style="color:#ef776a">1</span><span style="color:#e6da72">;</span><span style="color:#cdcdcd"> _key </span><span style="color:#e6da72">&lt;</span><span style="color:#cdcdcd"> _len; _key</span><span style="color:#e6da72">++</span><span style="color:#5cb0ee">)</span><span style="color:#cdcdcd"> </span><span style="color:#5cb0ee">{</span></div>
<div class="ln" style="top:508px">20</div>
<div class="cl" style="top:508px"><span style="color:#cdcdcd">      </span><span style="color:#cdcdcd">arg</span><span style="color:#e6da72">[</span><span style="color:#cdcdcd">_key </span><span style="color:#e6da72">-</span><span style="color:#cdcdcd"> </span><span style="color:#ef776a">1</span><span style="color:#e6da72">]</span><span style="color:#cdcdcd"> </span><span style="color:#e6da72">=</span><span style="color:#cdcdcd"> </span><span style="color:#5cb0ee">arguments</span><span style="color:#e6da72">[</span><span style="color:#cdcdcd">_key</span><span style="color:#e6da72">]</span><span style="color:#cdcdcd">;</span></div>
<div class="ln" style="top:532px">21</div>
<div class="cl" style="top:532px"><span style="color:#cdcdcd">    </span><span style="color:#5cb0ee">}</span></div>
<div class="ln" style="top:556px">22</div>
<div class="a" style="left:8px;top:540px;width:8px;height:8px;border-radius:50%;background:#951b1b"></div>
</div>
<div id="dv" class="a">
<div class="a" style="left:0px;top:-1px;width:947px;height:1px;background:#464646;"></div>
<div class="a" style="left:0px;top:0px;width:947px;height:29px;background:#323232;"></div>
<div class="t" style="left:20px;top:10.4px;font-size:11.5px;color:#e8e8e8;">调试器</div>
<div class="a" style="left:20px;top:27px;width:33px;height:2px;background:#d8d8d8;"></div>
<div class="a" style="left:61px;top:6px;width:39px;height:18px;background:#484848;border-radius:9px"></div>
<div class="t" style="left:66px;top:10.2px;font-size:12px;color:#e8e8e8;">10, 16</div>
<div class="t" style="left:120px;top:10.4px;font-size:11.5px;color:#9a9a9a;">问题</div>
<div class="t" style="left:162px;top:10.4px;font-size:11.5px;color:#9a9a9a;">输出</div>
<div class="t" style="left:204px;top:10.4px;font-size:11.5px;color:#9a9a9a;">终端</div>
<div class="a" style="left:0px;top:29px;width:947px;height:26px;background:#2a2a2a;"></div>
<div class="a" style="left:226px;top:29px;width:68px;height:26px;background:#0a0a0a;"></div>
<svg class="a" style="left:9px;top:35px" width="16" height="16" viewBox="0 0 16 16"><path d="M6 13 H1.5 V1.5 H13 V6" fill="none" stroke="#999" stroke-width="1.1"/><path d="M7 7 L14.5 10 L11.3 11.3 L14 14 L13 15 L10.3 12.3 L9 15.2 Z" fill="#999"/></svg>
<div class="a" style="left:37px;top:35px;width:1px;height:15px;background:#404040;"></div>
<div class="t" style="left:52px;top:37.2px;font-size:12px;color:#e0e0e0;">Wxml</div>
<div class="t" style="left:106px;top:37.2px;font-size:12px;color:#e0e0e0;">Console</div>
<div class="t" style="left:172px;top:37.2px;font-size:12px;color:#e0e0e0;">Sources</div>
<div class="t" style="left:237px;top:37.2px;font-size:12px;color:#e0e0e0;">Network</div>
<div class="t" style="left:306px;top:37.2px;font-size:12px;color:#e0e0e0;">Memory</div>
<div class="t" style="left:374px;top:37.2px;font-size:12px;color:#e0e0e0;">AppData</div>
<div class="t" style="left:444px;top:37.2px;font-size:12px;color:#e0e0e0;">Storage</div>
<div class="t" style="left:508px;top:37.2px;font-size:12px;color:#e0e0e0;">Security</div>
<div class="t" style="left:583px;top:37.2px;font-size:12px;color:#e0e0e0;">Sensor</div>
<div class="t" style="left:642px;top:37.2px;font-size:12px;color:#e0e0e0;">Mock</div>
<div class="t" style="left:695px;top:37.2px;font-size:12px;color:#e0e0e0;">Audits</div>
<div class="t" style="left:753px;top:37.2px;font-size:12px;color:#e0e0e0;">Trace</div>
<div class="t" style="left:803px;top:37.2px;font-size:12px;color:#e0e0e0;">Vulnerability</div>
<div class="a" style="left:0px;top:55px;width:947px;height:1px;background:#3c3c3c;"></div>
<div class="a" style="left:0px;top:56px;width:947px;height:26px;background:#2a2a2a;"></div>
<div class="a" style="left:10px;top:63.5px;width:12px;height:12px;border-radius:50%;background:#f0464d"></div>
<svg class="a" style="left:37px;top:62.5px" width="14" height="14" viewBox="0 0 14 14"><circle cx="7" cy="7" r="5.7" fill="none" stroke="#999" stroke-width="1.5"/><line x1="3" y1="3" x2="11" y2="11" stroke="#999" stroke-width="1.5"/></svg>
<div class="a" style="left:62px;top:60px;width:1px;height:18px;background:#3c3c3c;"></div>
<svg class="a" style="left:74px;top:63px" width="14" height="12" viewBox="0 0 14 12"><path d="M0.5 0.5 H13.5 L8.5 6 V11.5 H5.5 V6 Z" fill="#2a7fd0"/><path d="M3 2 H11 L7.5 6 V9 H6.5 V6 Z" fill="#1a5fa8"/></svg>
<svg class="a" style="left:102px;top:62px" width="14" height="14" viewBox="0 0 14 14"><circle cx="5.5" cy="5.5" r="4.3" fill="none" stroke="#999" stroke-width="1.2"/><line x1="8.6" y1="8.6" x2="13" y2="13" stroke="#999" stroke-width="1.4"/></svg>
<div class="a" style="left:127px;top:60px;width:1px;height:18px;background:#3c3c3c;"></div>
<div class="a" style="left:138px;top:63px;width:12px;height:12px;border:1px solid #8a8a8a;border-radius:2px"></div>
<div class="t" style="left:156px;top:64.2px;font-size:12px;color:#e0e0e0;">Preserve log</div>
<div class="a" style="left:232px;top:63px;width:12px;height:12px;border:1px solid #8a8a8a;border-radius:2px"></div>
<div class="t" style="left:250px;top:64.2px;font-size:12px;color:#e0e0e0;">Disable cache</div>
<div class="a" style="left:332px;top:60px;width:1px;height:18px;background:#3c3c3c;"></div>
<div class="t" style="left:342px;top:64.2px;font-size:12px;color:#e0e0e0;">Online</div>
<div class="a" style="left:403px;top:66px;width:0;height:0;border-left:4px solid transparent;border-right:4px solid transparent;border-top:6px solid #999"></div>
<div class="a" style="left:423px;top:60px;width:1px;height:18px;background:#3c3c3c;"></div>
<svg class="a" style="left:436px;top:62px" width="12" height="14" viewBox="0 0 12 14"><path d="M6 1 L11 6 H8 V10 H4 V6 H1 Z" fill="#999"/><rect x="1" y="12" width="10" height="1.2" fill="#999"/></svg>
<svg class="a" style="left:464px;top:62px" width="12" height="14" viewBox="0 0 12 14"><path d="M6 11 L11 6 H8 V1 H4 V6 H1 Z" fill="#999"/><rect x="1" y="12" width="10" height="1.2" fill="#999"/></svg>
<div class="a" style="left:0px;top:82px;width:947px;height:1px;background:#3c3c3c;"></div>
<div class="a" style="left:0px;top:83px;width:947px;height:24px;background:#262626;"></div>
<div class="a" style="left:1px;top:84px;width:170px;height:22px;background:#242424;"></div>
<div class="t" style="left:7px;top:91.2px;font-size:12px;color:#9a9a9a;">Filter</div>
<div class="a" style="left:180px;top:90px;width:12px;height:12px;border:1px solid #8a8a8a;border-radius:2px"></div>
<div class="t" style="left:198px;top:90.2px;font-size:12px;color:#e0e0e0;">Hide data URLs</div>
<div class="a" style="left:285px;top:85px;width:18px;height:20px;background:#555;border-radius:7px"></div>
<div class="t" style="left:287px;top:91.2px;font-size:12px;color:#a0a0a0;">All</div>
<div class="a" style="left:309px;top:88px;width:1px;height:16px;background:#3c3c3c;"></div>
<div class="t" style="left:316px;top:91.2px;font-size:12px;color:#e0e0e0;">Cloud</div>
<div class="t" style="left:357px;top:91.2px;font-size:12px;color:#e0e0e0;">XHR</div>
<div class="t" style="left:390px;top:91.2px;font-size:12px;color:#e0e0e0;">JS</div>
<div class="t" style="left:410px;top:91.2px;font-size:12px;color:#e0e0e0;">CSS</div>
<div class="t" style="left:441px;top:91.2px;font-size:12px;color:#e0e0e0;">Img</div>
<div class="t" style="left:472px;top:91.2px;font-size:12px;color:#e0e0e0;">Media</div>
<div class="t" style="left:515px;top:91.2px;font-size:12px;color:#e0e0e0;">Font</div>
<div class="t" style="left:549px;top:91.2px;font-size:12px;color:#e0e0e0;">Doc</div>
<div class="t" style="left:579px;top:91.2px;font-size:12px;color:#e0e0e0;">WS</div>
<div class="t" style="left:607px;top:91.2px;font-size:12px;color:#e0e0e0;">Manifest</div>
<div class="t" style="left:663px;top:91.2px;font-size:12px;color:#e0e0e0;">Other</div>
<div class="a" style="left:709px;top:89px;width:12px;height:12px;border:1px solid #8a8a8a;border-radius:2px"></div>
<div class="t" style="left:726px;top:90.2px;font-size:12px;color:#e0e0e0;">Has blocked cookies</div>
<div class="a" style="left:845px;top:89px;width:12px;height:12px;border:1px solid #8a8a8a;border-radius:2px"></div>
<div class="t" style="left:862px;top:90.2px;font-size:12px;color:#e0e0e0;">Blocked Requests</div>
<div class="a" style="left:0px;top:107px;width:947px;height:1px;background:#3c3c3c;"></div>
<div class="a" style="left:0px;top:108px;width:947px;height:80px;background:#222;"></div>
<div class="a" style="left:0px;top:108px;width:2px;height:18px;background:#555;"></div>
<div class="a" style="left:157px;top:108px;width:1px;height:80px;background:#3a3a3a;"></div>
<div class="t" style="left:37px;top:113.5px;width:118px;text-align:right;font-size:10px;color:#e0e0e0;letter-spacing:-0.4px">5000 ms</div>
<div class="a" style="left:315px;top:108px;width:1px;height:80px;background:#3a3a3a;"></div>
<div class="t" style="left:195px;top:113.5px;width:118px;text-align:right;font-size:10px;color:#e0e0e0;letter-spacing:-0.4px">10000 ms</div>
<div class="a" style="left:473px;top:108px;width:1px;height:80px;background:#3a3a3a;"></div>
<div class="t" style="left:353px;top:113.5px;width:118px;text-align:right;font-size:10px;color:#e0e0e0;letter-spacing:-0.4px">15000 ms</div>
<div class="a" style="left:631px;top:108px;width:1px;height:80px;background:#3a3a3a;"></div>
<div class="t" style="left:511px;top:113.5px;width:118px;text-align:right;font-size:10px;color:#e0e0e0;letter-spacing:-0.4px">20000 ms</div>
<div class="a" style="left:788px;top:108px;width:1px;height:80px;background:#3a3a3a;"></div>
<div class="t" style="left:668px;top:113.5px;width:118px;text-align:right;font-size:10px;color:#e0e0e0;letter-spacing:-0.4px">25000 ms</div>
<div class="a" style="left:946px;top:108px;width:1px;height:80px;background:#3a3a3a;"></div>
<div class="t" style="left:826px;top:113.5px;width:118px;text-align:right;font-size:10px;color:#e0e0e0;letter-spacing:-0.4px">30000 ms</div>
<div class="a" style="left:4px;top:133px;width:5px;height:2px;background:#ddd;"></div>
<div class="a" style="left:33px;top:133px;width:12px;height:2px;background:#ddd;"></div>
<div class="a" style="left:8px;top:136px;width:20px;height:2px;background:#1eb86a;"></div>
<div class="a" style="left:8px;top:139px;width:4px;height:2px;background:#1ea0c0;"></div>
<div class="a" style="left:8px;top:142px;width:21px;height:2px;background:#1eb86a;"></div>
<div class="a" style="left:8px;top:145px;width:4px;height:2px;background:#1ea0c0;"></div>
<div class="a" style="left:8px;top:148px;width:3px;height:2px;background:#bbb;"></div>
<div class="a" style="left:8px;top:151px;width:21px;height:2px;background:#1eb86a;"></div>
<div class="a" style="left:1px;top:154px;width:16px;height:2px;background:#a040c0;"></div>
<div class="a" style="left:17px;top:154px;width:12px;height:2px;background:#1eb86a;"></div>
<div class="a" style="left:41px;top:139px;width:9px;height:2px;background:#1ea0d8;"></div>
<div class="a" style="left:41px;top:151px;width:9px;height:2px;background:#1ea0d8;"></div>
<div class="a" style="left:35px;top:157px;width:5px;height:2px;background:#b070c0;"></div>
<div class="a" style="left:40px;top:157px;width:10px;height:2px;background:#1eb8c8;"></div>
<div class="a" style="left:253px;top:133px;width:8px;height:2px;background:#ddd;"></div>
<div class="a" style="left:242px;top:154px;width:7px;height:2px;background:#1eb86a;"></div>
<div class="a" style="left:254px;top:157px;width:12px;height:2px;background:#1eb8c8;"></div>
<div class="a" style="left:256px;top:159px;width:6px;height:2px;background:#ccc;"></div>
<div class="a" style="left:400px;top:154px;width:9px;height:2px;background:#1eb86a;"></div>
<div class="a" style="left:462px;top:133px;width:6px;height:2px;background:#ddd;"></div>
<div class="a" style="left:451px;top:154px;width:11px;height:2px;background:#1eb86a;"></div>
<div class="a" style="left:462px;top:157px;width:9px;height:2px;background:#1ea0d8;"></div>
<div class="a" style="left:0px;top:188px;width:947px;height:2px;background:#3c3c3c;"></div>
<div class="a" style="left:0px;top:190px;width:947px;height:26px;background:#272727;"></div>
<div class="t" style="left:5px;top:198.2px;font-size:12px;color:#e8e8e8;">Name</div>
<div class="a" style="left:0px;top:216px;width:947px;height:1px;background:#3c3c3c;"></div>
<div class="a" style="left:0;top:217px;width:947px;height:228px;overflow:hidden">
<div class="a" style="left:1px;top:-8.0px;width:946px;height:21px;background:#252525"></div>
<div class="a" style="left:8px;top:-4.0px;width:10px;height:13px;background:#f5f5f5;padding:2px 1.5px 2.5px"><div style="width:100%;height:100%;background:linear-gradient(#a89070,#4a3a30)"></div></div>
<div class="t" style="left:24px;top:-2.7px;font-size:11.7px;color:#e8e8e8">132</div>
<div class="a" style="left:1px;top:13.0px;width:946px;height:21px;background:#222222"></div>
<div class="a" style="left:8px;top:17.0px;width:10px;height:13px;background:#f5f5f5;padding:2px 1.5px 2.5px"><div style="width:100%;height:100%;background:linear-gradient(#e8a080,#f5e0d0)"></div></div>
<div class="t" style="left:24px;top:18.3px;font-size:11.7px;color:#e8e8e8">132</div>
<div class="a" style="left:1px;top:34.0px;width:946px;height:21px;background:#252525"></div>
<div class="a" style="left:8px;top:38.0px;width:10px;height:13px;background:#f5f5f5;padding:2px 1.5px 2.5px"><div style="width:100%;height:100%;background:linear-gradient(#222,#3a2a2a)"></div></div>
<div class="t" style="left:24px;top:39.3px;font-size:11.7px;color:#e8e8e8">132</div>
<div class="a" style="left:1px;top:55.0px;width:946px;height:21px;background:#222222"></div>
<div class="a" style="left:8px;top:59.0px;width:10px;height:13px;background:#f5f5f5;padding:2px 1.5px 2.5px"><div style="width:100%;height:100%;background:linear-gradient(#333,#8a8a9a)"></div></div>
<div class="t" style="left:24px;top:60.3px;font-size:11.7px;color:#e8e8e8">132</div>
<div class="a" style="left:1px;top:76.0px;width:946px;height:21px;background:#252525"></div>
<div class="a" style="left:8px;top:80.0px;width:10px;height:13px;background:#f8f8f8"></div>
<div class="t" style="left:24px;top:81.3px;font-size:11.7px;color:#e8e8e8">user_blind_info</div>
<div class="a" style="left:1px;top:97.0px;width:946px;height:21px;background:#222222"></div>
<svg class="a" style="left:8px;top:101.0px" width="12" height="14" viewBox="0 0 12 14"><path d="M0.5 0.5 H8 L11.5 4 V13.5 H0.5 Z" fill="#e8eef4" stroke="#9ab" stroke-width="0.8"/><path d="M1 13.5 Q5 9 11.5 11 V13.5 Z" fill="#3ab34a"/><path d="M2 6 Q6 3 10 7" fill="none" stroke="#bcd" stroke-width="1"/></svg>
<div class="t" style="left:24px;top:102.3px;font-size:11.7px;color:#e8e8e8">img_guide_video_chat.png</div>
<div class="a" style="left:1px;top:118.0px;width:946px;height:21px;background:#252525"></div>
<svg class="a" style="left:8px;top:122.0px" width="12" height="14" viewBox="0 0 12 14"><path d="M0.5 0.5 H8 L11.5 4 V13.5 H0.5 Z" fill="#e8eef4" stroke="#9ab" stroke-width="0.8"/><path d="M1 13.5 Q5 9 11.5 11 V13.5 Z" fill="#3ab34a"/><path d="M2 6 Q6 3 10 7" fill="none" stroke="#bcd" stroke-width="1"/></svg>
<div class="t" style="left:24px;top:123.3px;font-size:11.7px;color:#e8e8e8">head_boy.png</div>
<div class="a" style="left:1px;top:139.0px;width:946px;height:21px;background:#222222"></div>
<svg class="a" style="left:8px;top:143.0px" width="12" height="14" viewBox="0 0 12 14"><path d="M0.5 0.5 H8 L11.5 4 V13.5 H0.5 Z" fill="#e8eef4" stroke="#9ab" stroke-width="0.8"/><path d="M1 13.5 Q5 9 11.5 11 V13.5 Z" fill="#3ab34a"/><path d="M2 6 Q6 3 10 7" fill="none" stroke="#bcd" stroke-width="1"/></svg>
<div class="t" style="left:24px;top:144.3px;font-size:11.7px;color:#e8e8e8">head_girl.png</div>
<div class="a" style="left:1px;top:160.0px;width:946px;height:21px;background:#252525"></div>
<svg class="a" style="left:8px;top:164.0px" width="12" height="14" viewBox="0 0 12 14"><path d="M0.5 0.5 H8 L11.5 4 V13.5 H0.5 Z" fill="#e8eef4" stroke="#9ab" stroke-width="0.8"/><path d="M1 13.5 Q5 9 11.5 11 V13.5 Z" fill="#3ab34a"/><path d="M2 6 Q6 3 10 7" fill="none" stroke="#bcd" stroke-width="1"/></svg>
<div class="t" style="left:24px;top:165.3px;font-size:11.7px;color:#e8e8e8">upload.png</div>
<div class="a" style="left:1px;top:181.0px;width:946px;height:21px;background:#222222"></div>
<div class="a" style="left:8px;top:185.0px;width:10px;height:13px;background:#f5f5f5;padding:2px 1.5px 2.5px"><div style="width:100%;height:100%;background:radial-gradient(#c04a60,#88c0e0)"></div></div>
<div class="t" style="left:24px;top:186.3px;font-size:11.7px;color:#e8e8e8">img_guide_video_chat.png</div>
<div class="a" style="left:1px;top:202.0px;width:946px;height:21px;background:#252525"></div>
<div class="a" style="left:8px;top:206.0px;width:10px;height:13px;background:#f5f5f5;padding:2px 1.5px 2.5px"><div style="width:100%;height:100%;background:radial-gradient(#5a3a6a,#b39af9)"></div></div>
<div class="t" style="left:24px;top:207.3px;font-size:11.7px;color:#e8e8e8">head_boy.png</div>
<div class="a" style="left:1px;top:223.0px;width:946px;height:21px;background:#222222"></div>
<div class="a" style="left:8px;top:227.0px;width:10px;height:13px;background:#f8f8f8"></div>
</div>
<div class="a" style="left:0px;top:0px;width:1px;height:445px;background:#3a3a3a;"></div>
</div>
</body></html>
